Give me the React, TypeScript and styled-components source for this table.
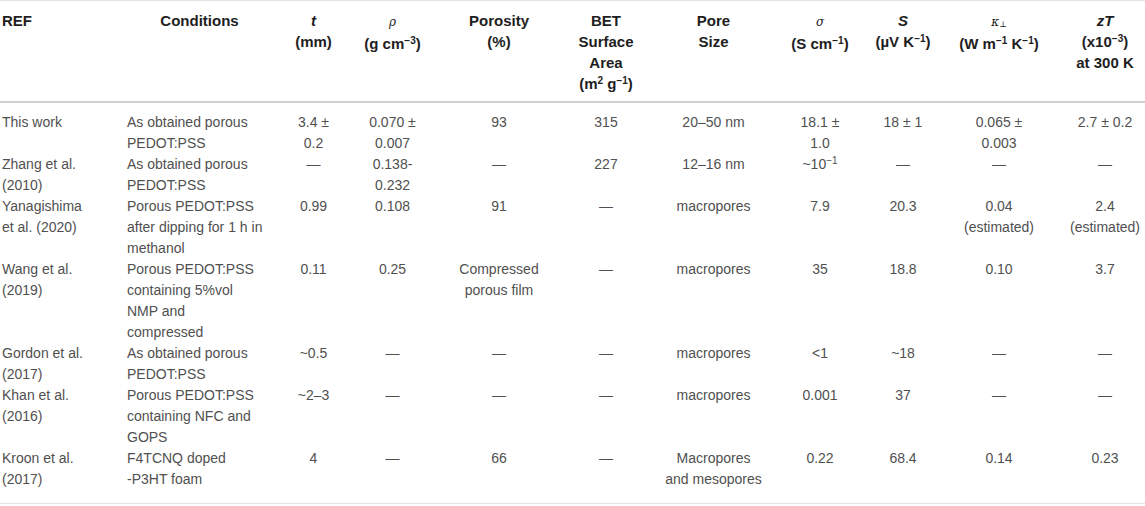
import React from "react";
import styled, { createGlobalStyle } from "styled-components";

const GlobalStyle = createGlobalStyle`
  html, body { margin: 0; padding: 0; background: #ffffff; }
  body { font-family: "Liberation Sans", Arial, Helvetica, sans-serif; }
`;

type Col = { w: number; align: "left" | "center"; headAlign: "left" | "center"; pl: number; pr: number };

const cols: Col[] = [
  { w: 124, align: "left", headAlign: "left", pl: 2, pr: 0 },
  { w: 148, align: "left", headAlign: "center", pl: 3, pr: 0 },
  { w: 83, align: "center", headAlign: "center", pl: 0, pr: 0 },
  { w: 89, align: "center", headAlign: "center", pl: 0, pr: 14 },
  { w: 104, align: "center", headAlign: "center", pl: 6, pr: 0 },
  { w: 112, align: "center", headAlign: "center", pl: 4, pr: 0 },
  { w: 107, align: "center", headAlign: "center", pl: 0, pr: 0 },
  { w: 94, align: "center", headAlign: "center", pl: 12, pr: 0 },
  { w: 90, align: "center", headAlign: "center", pl: 0, pr: 6 },
  { w: 101, align: "center", headAlign: "center", pl: 0, pr: 5 },
  { w: 93, align: "center", headAlign: "center", pl: 13, pr: 0 },
];

const Table = styled.table`
  width: 1145px;
  table-layout: fixed;
  border-collapse: collapse;
  border-top: 1px solid #e2e2e2;
  border-bottom: 1px solid #e2e2e2;
  font-size: 14px;
  line-height: 21px;
`;

const HeadRow = styled.tr`
  border-bottom: 2px solid #cfcfcf;
`;

const HeadCell = styled.th<{ $align: string; $pl: number; $pr: number }>`
  padding: 9px ${(p) => p.$pr}px 7px ${(p) => p.$pl}px;
  text-align: ${(p) => p.$align};
  vertical-align: top;
  font-size: 15px;
  font-weight: 700;
  color: #1e1e1e;
  white-space: nowrap;
`;

const BodyCell = styled.td<{ $align: string; $pl: number; $pr: number; $pt: number; $pb: number }>`
  padding: ${(p) => p.$pt}px ${(p) => p.$pr}px ${(p) => p.$pb}px ${(p) => p.$pl}px;
  text-align: ${(p) => p.$align};
  vertical-align: top;
  font-weight: 400;
  color: #505050;
  white-space: nowrap;
`;

const Sup = styled.sup`
  font-size: 10px;
  line-height: 0;
  vertical-align: 5px;
`;

const Sym = styled.i<{ $bold?: boolean; $small?: boolean; $serif?: boolean }>`
  font-style: italic;
  font-weight: ${(p) => (p.$bold ? 700 : 400)};
  font-size: ${(p) => (p.$small ? "12px" : "15px")};
  font-family: ${(p) => (p.$serif ? '"DejaVu Serif", "Liberation Serif", serif' : "inherit")};
`;

const Sub = styled.sub`
  font-size: 8px;
  line-height: 0;
  vertical-align: -1px;
`;

type Lines = React.ReactNode[];

const header: Lines[] = [
  ["REF"],
  ["Conditions"],
  [<Sym $bold>t</Sym>, "(mm)"],
  [<Sym $serif $small>ρ</Sym>, <>(g cm<Sup>−3</Sup>)</>],
  ["Porosity", "(%)"],
  ["BET", "Surface", "Area", <>(m<Sup>2</Sup> g<Sup>−1</Sup>)</>],
  ["Pore", "Size"],
  [<Sym $serif $small>σ</Sym>, <>(S cm<Sup>−1</Sup>)</>],
  [<Sym $bold>S</Sym>, <>(µV K<Sup>−1</Sup>)</>],
  [<Sym $small $serif>κ<Sub>⊥</Sub></Sym>, <>(W m<Sup>−1</Sup> K<Sup>−1</Sup>)</>],
  [<Sym $bold>zT</Sym>, <>(x10<Sup>−3</Sup>)</>, "at 300 K"],
];

const D = "—";

const rows: Lines[][] = [
  [["This work"], ["As obtained porous", "PEDOT:PSS"], ["3.4 ±", "0.2"], ["0.070 ±", "0.007"], ["93"], ["315"], ["20–50 nm"], ["18.1 ±", "1.0"], ["18 ± 1"], ["0.065 ±", "0.003"], ["2.7 ± 0.2"]],
  [["Zhang et al.", "(2010)"], ["As obtained porous", "PEDOT:PSS"], [D], ["0.138-", "0.232"], [D], ["227"], ["12–16 nm"], [<>~10<Sup>−1</Sup></>], [D], [D], [D]],
  [["Yanagishima", "et al. (2020)"], ["Porous PEDOT:PSS", "after dipping for 1 h in", "methanol"], ["0.99"], ["0.108"], ["91"], [D], ["macropores"], ["7.9"], ["20.3"], ["0.04", "(estimated)"], ["2.4", "(estimated)"]],
  [["Wang et al.", "(2019)"], ["Porous PEDOT:PSS", "containing 5%vol", "NMP and", "compressed"], ["0.11"], ["0.25"], ["Compressed", "porous film"], [D], ["macropores"], ["35"], ["18.8"], ["0.10"], ["3.7"]],
  [["Gordon et al.", "(2017)"], ["As obtained porous", "PEDOT:PSS"], ["~0.5"], [D], [D], [D], ["macropores"], ["<1"], ["~18"], [D], [D]],
  [["Khan et al.", "(2016)"], ["Porous PEDOT:PSS", "containing NFC and", "GOPS"], ["~2–3"], [D], [D], [D], ["macropores"], ["0.001"], ["37"], [D], [D]],
  [["Kroon et al.", "(2017)"], ["F4TCNQ doped", "-P3HT foam"], ["4"], [D], ["66"], [D], ["Macropores", "and mesopores"], ["0.22"], ["68.4"], ["0.14"], ["0.23"]],
];

const renderLines = (lines: Lines) =>
  lines.map((l, i) => (
    <React.Fragment key={i}>
      {i > 0 && <br />}
      {l}
    </React.Fragment>
  ));

export default function App() {
  return (
    <>
      <GlobalStyle />
      <Table>
        <colgroup>
          {cols.map((c, i) => (
            <col key={i} style={{ width: c.w }} />
          ))}
        </colgroup>
        <thead>
          <HeadRow>
            {header.map((h, i) => (
              <HeadCell key={i} $align={cols[i].headAlign} $pl={cols[i].pl} $pr={cols[i].pr}>
                {renderLines(h)}
              </HeadCell>
            ))}
          </HeadRow>
        </thead>
        <tbody>
          {rows.map((r, ri) => (
            <tr key={ri}>
              {r.map((cell, ci) => (
                <BodyCell
                  key={ci}
                  $align={cols[ci].align}
                  $pl={cols[ci].pl}
                  $pr={cols[ci].pr}
                  $pt={ri === 0 ? 9 : 0}
                  $pb={ri === rows.length - 1 ? 13 : 0}
                >
                  {renderLines(cell)}
                </BodyCell>
              ))}
            </tr>
          ))}
        </tbody>
      </Table>
    </>
  );
}
